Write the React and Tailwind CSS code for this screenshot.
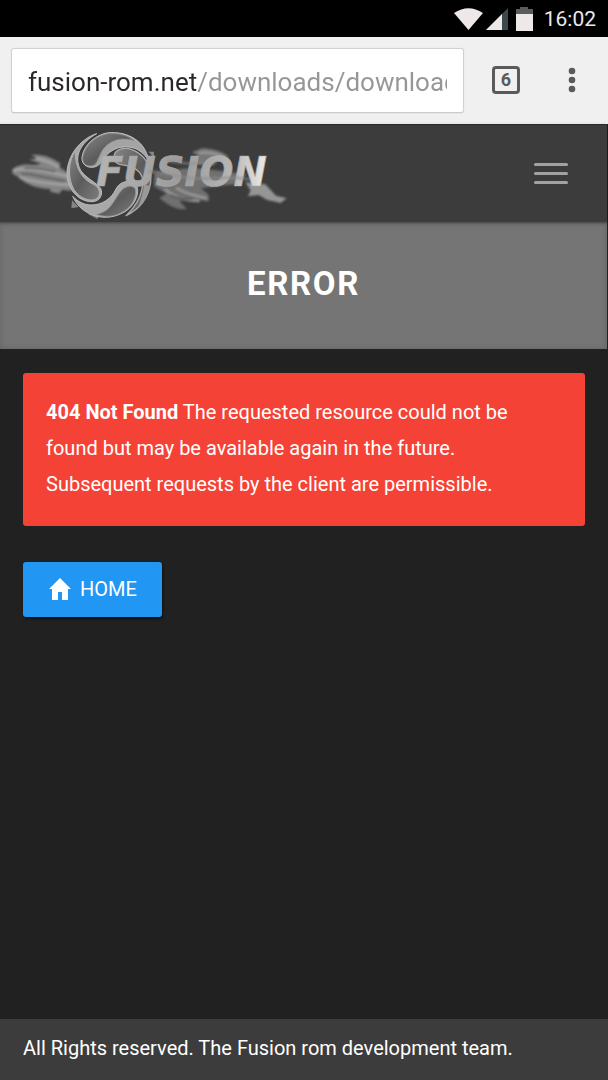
import React, { useState } from 'react';

function StatusBar() {
  return (
    <div className="flex h-[37px] items-center justify-end bg-black pr-3 text-[#eee8e8]">
      <svg className="h-[22px] w-[29px]" viewBox="0 0 29 22" aria-hidden="true">
        <path d="M0 5Q14.500 -4.500 29 5L14.500 22Z" fill="currentColor" />
      </svg>
      <svg className="ml-[3px] h-[22px] w-[22px]" viewBox="0 0 22 22" aria-hidden="true">
        <path d="M22 0V22H0Z" fill="#3c474e" />
        <path d="M16 6V22H0Z" fill="currentColor" />
      </svg>
      <svg className="ml-2 h-[24px] w-[17px]" viewBox="0 0 17 24" aria-hidden="true">
        <path d="M4 0H12V2H17V7H0V2H4Z" fill="#5c5c5c" />
        <path d="M0 7H17V24H0Z" fill="currentColor" />
      </svg>
      <span className="ml-[11px] text-[21px] leading-6">16:02</span>
    </div>
  );
}

function BrowserBar() {
  const [url, setUrl] = useState('fusion-rom.net/downloads/downloads');

  return (
    <div className="flex h-[87px] items-center border-b border-[#fafafa] bg-[#f0f0f0] pl-3 text-[#5a5a5a]">
      <div className="h-[63px] min-w-0 flex-1 rounded-xs bg-white px-4 shadow-[0_0_1px_1px_#cfcfcf,0_1px_1px_#aaa]">
        {/* the host is dark, the path after it is grey */}
        <input
          type="text"
          aria-label="Address"
          value={url}
          onChange={(e) => setUrl(e.target.value)}
          className="h-full w-full bg-linear-to-r from-[#2b2628] from-[169px] to-[#969696] to-[169px] bg-clip-text pt-[3px] text-[26px] text-transparent caret-black outline-none"
        />
      </div>
      <button
        type="button"
        aria-label="Open tabs"
        className="ml-[29px] flex h-7 w-7 items-center justify-center rounded-sm border-3 border-[#5a5a5a] text-lg font-bold"
      >
        6
      </button>
      <button type="button" aria-label="More options" className="mr-4 ml-8 flex w-10 justify-center">
        <svg className="h-[26px] w-[8px]" viewBox="0 0 8 26" fill="currentColor" aria-hidden="true">
          <circle cx="4" cy="4" r="3.300" />
          <circle cx="4" cy="13" r="3.300" />
          <circle cx="4" cy="22" r="3.300" />
        </svg>
      </button>
    </div>
  );
}

function Logo() {
  return (
    <svg className="h-[97px] w-[280px]" viewBox="30 12 840 291" role="img" aria-label="Fusion">
      <defs>
        <linearGradient id="blade" x1="0" y1="0" x2="1" y2="1">
          <stop offset="0" stopColor="#868686" />
          <stop offset="0.500" stopColor="#5c5c5c" />
          <stop offset="1" stopColor="#7d7d7d" />
        </linearGradient>
        <linearGradient id="letters" x1="0" y1="0" x2="1" y2="0">
          <stop offset="0" stopColor="#b4b4b4" />
          <stop offset="0.500" stopColor="#9c9c9c" />
          <stop offset="0.800" stopColor="#b8b6b6" />
          <stop offset="1" stopColor="#eeeaea" />
        </linearGradient>
        <filter id="smoke" x="-10%" y="-10%" width="120%" height="120%">
          <feGaussianBlur stdDeviation="3" />
        </filter>
      </defs>

      {/* wings */}
      <g filter="url(#smoke)">
        <path
          d="M36 147C50 130 76 128 106 132L124 128L88 116L110 112L94 102C130 98 160 112 182 128L176 138C192 146 204 156 212 168L214 210L186 206L178 218L150 212L152 204C110 202 76 190 58 170L38 158Z"
          fill="#858585"
        />
        <path d="M40 148C86 138 138 150 206 166M58 168C104 186 156 188 214 192M108 112C140 118 160 128 178 140" fill="none" stroke="#a2a2a2" strokeWidth="8" />
        <path d="M64 158C100 158 140 172 196 180M74 142C110 140 140 146 166 152" fill="none" stroke="#5c5c5c" strokeWidth="5" />
        <path d="M576 94L606 82C642 84 668 90 688 110L660 112L640 134L590 128L594 104Z" fill="#777777" />
        <path d="M464 156C520 144 560 140 600 142L740 160L704 190L602 202C624 216 634 228 624 242L590 234L538 240L560 264C528 268 500 250 478 230L500 218L462 196Z" fill="#6f6f6f" />
        <path d="M494 204C520 226 548 238 600 240M528 200C556 220 584 222 620 232M596 96C624 92 650 98 672 108" fill="none" stroke="#959595" strokeWidth="8" />
        <path d="M510 222C532 232 552 236 580 234" fill="none" stroke="#4e4e4e" strokeWidth="5" />
        <path d="M736 184L796 190L828 224L860 232L842 246L800 236L776 222L744 226L752 208Z" fill="#959595" />
      </g>

      {/* ball */}
      <g strokeLinejoin="round">
        <path d="M446 92L462 92L462 110ZM216 238L214 262L236 258ZM262 278L292 294L300 280Z" fill="#858585" />
        <path
          d="M290 38C250 50 206 92 201 152C200 206 236 242 276 242C300 242 310 220 302 202C286 182 258 172 242 148C220 108 240 66 290 38Z"
          fill="#a8a8a8"
          stroke="#bcbcbc"
          strokeWidth="3"
        />
        <path
          d="M226 88C204 124 202 170 222 206C240 234 278 246 294 230C304 214 296 198 280 190C248 176 224 142 226 88Z"
          fill="url(#blade)"
          stroke="#b2b2b2"
          strokeWidth="3"
        />
        <path
          d="M246 116C244 92 268 48 320 36C384 28 436 62 446 118C420 78 388 74 356 80C326 90 312 108 300 128C284 146 250 142 246 116Z"
          fill="#a4a4a4"
          stroke="#c0c0c0"
          strokeWidth="3"
        />
        <path
          d="M248 114C250 88 272 50 320 39C356 34 382 44 402 58C356 46 328 60 308 86C298 102 294 118 286 130C270 140 250 134 248 114Z"
          fill="url(#blade)"
          stroke="#888888"
          strokeWidth="2"
        />
        <path
          d="M218 226C244 286 320 308 378 270C410 248 422 206 406 188C388 176 360 180 348 204C334 234 306 252 274 252C250 252 232 240 218 226Z"
          fill="#a8a8a8"
          stroke="#bababa"
          strokeWidth="3"
        />
        <path
          d="M290 280C338 270 342 232 366 206C382 192 402 192 406 206C410 232 392 262 362 276C338 288 312 288 290 280Z"
          fill="url(#blade)"
          stroke="#8e8e8e"
          strokeWidth="2"
        />
        <path
          d="M342 108C342 86 370 76 396 86C438 102 456 140 452 184C446 224 424 262 378 284C410 254 430 214 428 174C420 140 386 134 358 130C346 126 342 118 342 108Z"
          fill="url(#blade)"
          stroke="#aaaaaa"
          strokeWidth="4"
        />
        <path d="M450 196C442 226 430 248 412 264C424 236 430 214 432 190Z" fill="#999999" />
      </g>

      <text
        x="288"
        y="195"
        fill="url(#letters)"
        stroke="#a8a8a8"
        strokeWidth="2"
        className="font-['DejaVu_Sans',sans-serif] text-[120px] font-bold italic"
      >
        FUSION
      </text>
      <g filter="url(#smoke)" fill="none" stroke="#8d8d8d" strokeWidth="8" opacity="0.600">
        <path d="M446 152C490 150 520 168 580 172C640 176 690 162 750 176M500 120C540 122 570 134 610 126" />
      </g>
    </svg>
  );
}

function App() {
  return (
    <div className="flex min-h-screen flex-col bg-[#212121] font-[Roboto,sans-serif] text-white">
      <StatusBar />
      <BrowserBar />

      <header className="z-10 mr-px flex items-center justify-between border-t border-[#2c2628] bg-[#3c3c3c] pr-[39px] pl-[10px] shadow-[0_1px_3px_rgba(0,0,0,0.4)]">
        <a href="/">
          <Logo />
        </a>
        <button type="button" aria-label="Toggle navigation" className="flex w-[34px] flex-col gap-[6px]">
          <span className="h-[3px] w-full rounded-full bg-[#a2a2a2]" />
          <span className="h-[3px] w-full rounded-full bg-[#a2a2a2]" />
          <span className="h-[3px] w-full rounded-full bg-[#a2a2a2]" />
        </button>
      </header>

      <div className="mr-px bg-[#757575] pt-[42px] pb-[45px] text-center shadow-[inset_0_0_6px_rgba(0,0,0,0.15)]">
        <h1 className="text-[33px] leading-10 font-bold tracking-wider">ERROR</h1>
      </div>

      <main className="flex-1 px-[23px] pt-6">
        <div role="alert" className="rounded-[3px] bg-[#f44336] px-[23px] pt-[21px] pb-6 text-xl leading-9">
          <strong className="font-bold">404 Not Found</strong> The requested resource could not be found but may be
          available again in the future. Subsequent requests by the client are permissible.
        </div>
        <a
          href="/"
          className="mt-9 inline-flex h-[55px] items-center gap-2 rounded-[3px] bg-[#2196f3] px-[25px] pb-[2px] text-xl shadow-[1px_2px_3px_rgba(0,0,0,0.5)]"
        >
          <svg className="h-6 w-6" viewBox="0 0 24 24" fill="currentColor" aria-hidden="true">
            <path d="M12 1L23 12H20V23H14V15H10V23H4V12H1Z" />
          </svg>
          HOME
        </a>
      </main>

      <footer className="bg-[#3c3c3c] px-[23px] pt-[11px] pb-[14px] text-xl leading-9">
        All Rights reserved. The Fusion rom development team.
      </footer>
    </div>
  );
}

export default App;
